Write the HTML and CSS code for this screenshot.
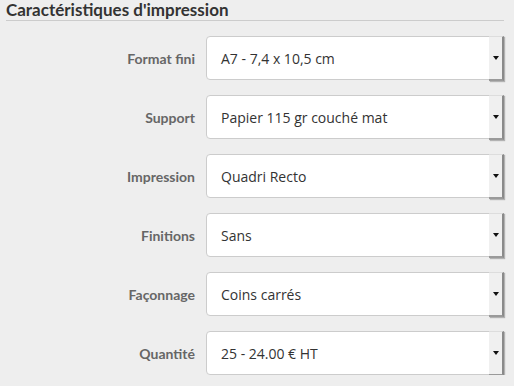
FILE: index.html
```html
<!DOCTYPE html>
<html lang="fr">
<head>
<meta charset="utf-8">
<link rel="stylesheet" href="styles.css">
</head>
<body>
<section class="panel">
  <h2 class="title">Caractéristiques d'impression</h2>
  <div class="form">
    <div class="row"><label class="label">Format fini</label><div class="select"><span class="value">A7 - 7,4 x 10,5 cm</span><span class="arrow"></span></div></div>
    <div class="row"><label class="label">Support</label><div class="select"><span class="value">Papier 115 gr couché mat</span><span class="arrow"></span></div></div>
    <div class="row"><label class="label">Impression</label><div class="select"><span class="value">Quadri Recto</span><span class="arrow"></span></div></div>
    <div class="row"><label class="label">Finitions</label><div class="select"><span class="value">Sans</span><span class="arrow"></span></div></div>
    <div class="row"><label class="label">Façonnage</label><div class="select"><span class="value">Coins carrés</span><span class="arrow"></span></div></div>
    <div class="row"><label class="label">Quantité</label><div class="select"><span class="value">25 - 24.00 € HT</span><span class="arrow"></span></div></div>
  </div>
</section>
</body>
</html>
```
FILE: styles.css
```css
html, body {
  margin: 0;
  padding: 0;
  background: #eeeeee;
}
.panel {
  width: 498px;
  padding: 0 0 0 6px;
}
.title {
  margin: 0;
  font-family: Lato, "Open Sans", sans-serif;
  font-weight: 700;
  font-size: 17px;
  line-height: 19px;
  color: #333333;
  border-bottom: 1px solid #cccccc;
  height: 20px;
}
.form {
  margin-top: 15px;
  display: flex;
  flex-direction: column;
  gap: 15px;
}
.row {
  display: grid;
  grid-template-columns: 189px 298px;
  column-gap: 11px;
  align-items: center;
}
.label {
  text-align: right;
  font-family: Lato, sans-serif;
  font-weight: 700;
  font-size: 14px;
  color: #666666;
}
.select {
  display: flex;
  height: 42px;
  border: 1px solid #cccccc;
  border-radius: 4px;
  background: #ffffff;
}
.value {
  flex: 1;
  padding-left: 14px;
  align-self: center;
  font-family: "Open Sans", sans-serif;
  font-size: 14px;
  color: #333333;
}
.arrow {
  width: 13px;
  margin-right: -1px;
  margin-top: -1px;
  height: 42px;
  background: #f0f0f0;
  border-top: 1px solid #dddddd;
  border-right: 2px solid #8a8a8a;
  border-bottom: 2px solid #9a9a9a;
  box-shadow: 1px 1px 1px rgba(0,0,0,0.25);
  display: flex;
  align-items: center;
  justify-content: center;
}
.arrow::after {
  content: "";
  width: 0;
  height: 0;
  border-left: 3px solid transparent;
  border-right: 3px solid transparent;
  border-top: 4px solid #111111;
}
```
